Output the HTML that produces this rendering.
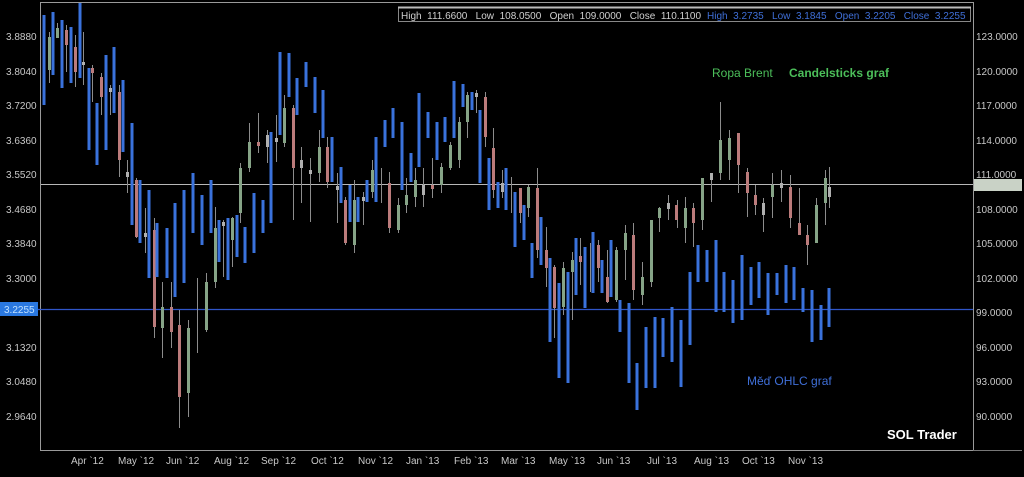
<!DOCTYPE html>
<html><head><meta charset="utf-8"><style>
body{margin:0;background:#000;width:1024px;height:477px;overflow:hidden;font-family:"Liberation Sans",sans-serif}
svg{display:block}
</style></head><body>
<svg width="1024" height="477" viewBox="0 0 1024 477" xmlns="http://www.w3.org/2000/svg" font-family="Liberation Sans, sans-serif">
<rect width="1024" height="477" fill="#000"/>
<path d="M40.5 2.5 H973.5 V450.5 H40.5 Z" fill="none" stroke="#9a9a9a" stroke-width="1"/>
<line x1="973" y1="450.5" x2="1022" y2="450.5" stroke="#777"/>
<line x1="41" y1="184.5" x2="973" y2="184.5" stroke="#b8b8b8"/>
<line x1="38" y1="309.5" x2="973" y2="309.5" stroke="#2f55c8" stroke-width="1.2"/>
<path stroke="#8c8c8c" stroke-width="1" fill="none" d="M49.5 32V83M57.5 23V38M66.5 25V72M75.5 35V87M83.5 32V85M92.5 65V102M101.5 73V115M110.5 85V115M119.5 85V177M127.5 160V193M136.5 178V238M145.5 208V253M154.5 218V338M162.5 282V358M171.5 282V348M179.5 310V428M188.5 320V417M197.5 278V353M206.5 273V332M215.5 207V288M223.5 220V277M232.5 217V267M240.5 163V223M249.5 123V172M258.5 113V153M267.5 130V163M276.5 115V162M284.5 95V147M293.5 105V220M301.5 147V203M310.5 158V222M319.5 130V182M327.5 137V188M337.5 173V223M345.5 197V245M354.5 180V253M363.5 192V225M372.5 160V198M381.5 168V203M389.5 172V233M398.5 198V233M406.5 178V213M415.5 168V207M423.5 168V207M432.5 158V198M441.5 163V193M450.5 142V170M459.5 117V168M467.5 92V138M476.5 90V113M485.5 92V147M493.5 128V198M502.5 170V198M511.5 177V213M520.5 188V223M528.5 185V217M537.5 168V258M546.5 227V287M554.5 265V338M563.5 262V315M572.5 252V320M580.5 238V285M590.5 243V292M598.5 240V282M607.5 250V303M616.5 247V302M625.5 225V280M633.5 223V300M642.5 262V305M651.5 220V287M659.5 207V232M668.5 195V220M677.5 200V228M685.5 197V243M693.5 203V247M702.5 178V230M711.5 173V202M720.5 102V180M729.5 130V180M738.5 133V193M747.5 168V217M755.5 185V215M763.5 198V232M772.5 173V218M781.5 170V202M790.5 175V228M799.5 188V235M807.5 225V265M816.5 198V243M825.5 170V225M829.5 167V208"/>
<path stroke="#86a487" stroke-width="3" fill="none" d="M49.5 37V70M57.5 28V38M162.5 307V328M188.5 328V393M206.5 282V330M215.5 228V282M232.5 218V240M240.5 168V213M249.5 142V168M284.5 108V143M319.5 147V173M354.5 200V245M372.5 170V192M398.5 205V230M406.5 195V205M415.5 180V197M441.5 167V185M450.5 145V168M459.5 122V160M467.5 95V122M528.5 187V208M563.5 268V307M572.5 260V272M616.5 250V300M625.5 233V250M642.5 277V295M651.5 220V282M659.5 208V218M685.5 208V228M702.5 178V220M720.5 140V173M729.5 138V160M772.5 185V197M816.5 205V243M825.5 178V203"/>
<path stroke="#bb7b7b" stroke-width="3" fill="none" d="M66.5 30V45M75.5 47V72M92.5 68V73M101.5 77V97M119.5 92V160M136.5 180V237M154.5 230V327M171.5 307V332M179.5 325V397M258.5 142V146M293.5 108V168M327.5 147V182M345.5 200V243M389.5 183V228M432.5 185V189M485.5 97V137M493.5 148V190M520.5 188V213M537.5 188V250M546.5 250V268M554.5 267V308M580.5 256V262M598.5 245V268M607.5 277V302M633.5 235V290M676.5 205V220M693.5 208V223M738.5 133V165M747.5 172V193M755.5 195V205M790.5 187V218M799.5 223V235M807.5 235V245"/>
<path stroke="#b0b0b0" stroke-width="3" fill="none" d="M83.5 62V65M110.5 88V92M127.5 172V177M145.5 233V237M223.5 222V226M267.5 135V147M276.5 138V142M301.5 160V168M310.5 170V174M337.5 186V190M363.5 197V201M423.5 185V195M476.5 93V97M502.5 183V192M668.5 203V209M711.5 173V180M763.5 203V215M781.5 183V188M829.5 187V197"/>
<path stroke="#3a72dc" stroke-width="3" fill="none" d="M44 15V105M53 12V75M62 20V88M71 27V83M80 3V78M89 68V150M97 103V165M106 55V150M114 47V113M123 80V152M132 123V225M140 180V243M149 190V278M157 223V277M167 228V278M175 203V297M184 190V283M193 173V233M202 195V245M211 180V233M219 220V262M228 218V280M237 215V257M245 227V263M254 193V253M263 200V233M271 132V223M280 52V135M289 53V97M297 78V115M306 62V87M315 77V113M323 90V138M332 137V182M341 167V203M350 185V222M358 197V222M367 180V202M376 137V202M385 120V147M393 108V138M402 122V190M411 153V182M419 93V167M428 112V138M437 122V160M445 117V142M454 81V138M463 84V107M472 92V110M480 110V183M489 158V210M498 182V208M506 168V210M515 192V247M524 205V240M532 243V278M541 217V265M550 258V342M559 283V378M568 272V383M576 238V295M585 247V308M593 232V293M602 260V293M611 240V297M620 300V332M629 303V383M637 363V410M646 327V388M655 317V388M663 318V357M672 307V362M681 320V387M690 272V345M698 245V282M707 250V282M716 240V312M724 272V312M733 280V323M742 255V320M751 267V305M759 262V298M768 273V315M777 273V295M786 265V303M794 267V300M803 288V312M812 290V342M821 305V340M829 288V327"/>
<rect x="398.5" y="7.5" width="572" height="14" fill="#000" stroke="#888"/>
<line x1="398" y1="7.5" x2="971" y2="7.5" stroke="#bbb" stroke-width="2"/>
<text x="401" y="19" font-size="10" fill="#d0d0d0" xml:space="preserve">High  111.6600   Low  108.0500   Open  109.0000   Close  110.1100</text>
<text x="707" y="19" font-size="10" fill="#3f6fd8" xml:space="preserve">High  3.2735   Low  3.1845   Open  3.2205   Close  3.2255</text>
<g font-size="10" fill="#c8c8c8">
<text x="6" y="40">3.8880</text><text x="6" y="75">3.8040</text><text x="6" y="109">3.7200</text><text x="6" y="144">3.6360</text><text x="6" y="178">3.5520</text><text x="6" y="213">3.4680</text><text x="6" y="247">3.3840</text><text x="6" y="282">3.3000</text><text x="6" y="351">3.1320</text><text x="6" y="385">3.0480</text><text x="6" y="420">2.9640</text>
</g>
<rect x="0" y="302" width="38" height="14" fill="#2a78e0"/>
<text x="4" y="313" font-size="10" fill="#bfe0ff">3.2255</text>
<rect x="974" y="179" width="48" height="12" fill="#c9d2c6"/>
<g font-size="10" fill="#c8c8c8">
<text x="976" y="40">123.0000</text><text x="976" y="75">120.0000</text><text x="976" y="109">117.0000</text><text x="976" y="144">114.0000</text><text x="976" y="178">111.0000</text><text x="976" y="213">108.0000</text><text x="976" y="247">105.0000</text><text x="976" y="282">102.0000</text><text x="976" y="316">99.0000</text><text x="976" y="351">96.0000</text><text x="976" y="385">93.0000</text><text x="976" y="420">90.0000</text>
</g>
<g font-size="10" fill="#c8c8c8">
<text x="71" y="464">Apr `12</text><text x="118" y="464">May `12</text><text x="166" y="464">Jun `12</text><text x="214" y="464">Aug `12</text><text x="261" y="464">Sep `12</text><text x="311" y="464">Oct `12</text><text x="358" y="464">Nov `12</text><text x="406" y="464">Jan `13</text><text x="454" y="464">Feb `13</text><text x="501" y="464">Mar `13</text><text x="549" y="464">May `13</text><text x="597" y="464">Jun `13</text><text x="647" y="464">Jul `13</text><text x="694" y="464">Aug `13</text><text x="742" y="464">Oct `13</text><text x="788" y="464">Nov `13</text>
</g>
<text x="712" y="77" font-size="12" fill="#4cbf5a">Ropa Brent</text>
<text x="789" y="77" font-size="12" font-weight="bold" fill="#4cbf5a">Candelsticks graf</text>
<text x="747" y="385" font-size="12" fill="#3f6fd8">Měď OHLC graf</text>
<text x="887" y="439" font-size="13" font-weight="bold" fill="#fff">SOL Trader</text>
</svg>
</body></html>
